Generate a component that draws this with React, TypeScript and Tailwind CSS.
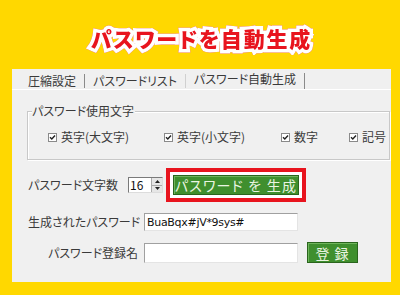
import React from "react";

const ui = {
  fontFamily: '"Noto Sans CJK JP", "Noto Sans", sans-serif',
  fontFeatureSettings: '"palt"',
};

function Check() {
  return (
    <span className="inline-flex w-[9px] h-[9px] border border-[#8a8a8a] bg-white items-center justify-center">
      <svg width="7" height="7" viewBox="0 0 7 7">
        <path d="M1 3.2 L2.8 5 L6 1.5" stroke="#222" strokeWidth="1.4" fill="none" />
      </svg>
    </span>
  );
}

function CB({ label, w }: { label: string; w?: string }) {
  return (
    <div className={`flex items-center gap-[4px] ${w ?? ""}`}>
      <Check />
      <span>{label}</span>
    </div>
  );
}

export default function App() {
  return (
    <div className="w-[400px] h-[295px] bg-[#ffd800] flex flex-col overflow-hidden" style={ui}>
      <div className="h-[69px] flex items-center justify-center pl-[3px] pt-[8px]">
        <span
          className="text-[21px] font-black tracking-[1.8px] text-[#e8141e] leading-none [paint-order:stroke_fill] [-webkit-text-stroke:7px_white] [filter:drop-shadow(0_0_0.6px_#e8141e)]"
          style={{ fontFamily: '"Noto Sans CJK JP", sans-serif' }}
        >
          パスワードを自動生成
        </span>
      </div>
      <div className="ml-[12px] w-[379px] h-[213px] bg-[#f0f0f0] flex flex-col text-[12px] text-[#3a3a3a] leading-none">
        {/* tabs */}
        <div className="h-[21px] flex items-end pl-[16px] border-b border-white">
          <span className="pb-[2px]">圧縮設定</span>
          <span className="mx-[8px] w-px h-[14px] bg-[#8a8a8a] mb-[1px]" />
          <span className="pb-[2px]">パスワードリスト</span>
          <span className="mx-[8px] w-px h-[14px] bg-[#d0d0d0] mb-[1px]" />
          <span className="pb-[4px]">パスワード自動生成</span>
          <span className="mx-[8px] w-px h-[16px] bg-[#8a8a8a] mb-[0px]" />
        </div>
        {/* group box */}
        <div className="relative mt-[21px] ml-[15px] mr-[1px] h-[49px] border border-[#c8c8c8] shadow-[inset_1px_1px_0_white,1px_1px_0_white] flex items-center pl-[20px] pt-[3px]">
          <span className="absolute left-[4px] top-[-7px] bg-[#f0f0f0] pr-[1px]">パスワード使用文字</span>
          <CB label="英字(大文字)" w="w-[116px]" />
          <CB label="英字(小文字)" w="w-[117px]" />
          <CB label="数字" w="w-[68px]" />
          <CB label="記号" />
        </div>
        {/* row 1 */}
        <div className="mt-[8px] h-[34px] flex items-center">
          <span className="ml-[16px] w-[100px] text-[12px]">パスワード文字数</span>
          <div className="w-[35px] h-[16px] flex border border-[#7a7a7a] border-r-[#dcdcdc] border-b-[#dcdcdc] bg-white">
            <span className="flex-1 pl-[1px] flex items-center text-[12px] text-[#111]">16</span>
            <div className="w-[11px] flex flex-col bg-[#e6e6e6] border-l border-[#aaa]">
              <div className="flex-1 flex items-center justify-center border-b border-[#aaa]">
                <svg width="5" height="3" viewBox="0 0 5 3"><path d="M0 3 L2.5 0 L5 3Z" fill="#222" /></svg>
              </div>
              <div className="flex-1 flex items-center justify-center">
                <svg width="5" height="3" viewBox="0 0 5 3"><path d="M0 0 L2.5 3 L5 0Z" fill="#222" /></svg>
              </div>
            </div>
          </div>
          <div className="ml-[3px] w-[140px] h-[34px] border-[4px] border-[#e8141e] bg-white p-[3px]">
            <div className="w-full h-full bg-[#3f8f2e] border border-[#2a651d] shadow-[inset_1px_1px_0_#6fb45c] flex items-center justify-center text-[14px] text-[#eaf5e2] tracking-[1.2px]">
              パスワード を 生成
            </div>
          </div>
        </div>
        {/* row 2 */}
        <div className="mt-[11px] h-[18px] flex items-center">
          <span className="ml-[16px] w-[116px]">生成されたパスワード</span>
          <div className="w-[154px] h-[18px] bg-white border border-[#a0a0a0] border-r-[#e4e4e4] border-b-[#e4e4e4] flex items-center pl-[2px] text-[12px] text-[#111]" style={{ fontFamily: '"DejaVu Sans", sans-serif', fontSize: "11px", letterSpacing: "-0.3px" }}>
            BuaBqx#jV*9sys#
          </div>
        </div>
        {/* row 3 */}
        <div className="mt-[11px] h-[21px] flex items-center">
          <span className="ml-[36px] w-[96px]">パスワード登録名</span>
          <div className="w-[154px] h-[20px] bg-white border border-[#a0a0a0] border-r-[#e4e4e4] border-b-[#e4e4e4]" />
          <div className="ml-[9px] w-[51px] h-[21px] bg-[#3f8f2e] border border-[#2a651d] shadow-[inset_1px_1px_0_#6fb45c] flex items-center justify-center text-[14px] text-[#eaf5e2] tracking-[1px]">
            登 録
          </div>
        </div>
      </div>
    </div>
  );
}
